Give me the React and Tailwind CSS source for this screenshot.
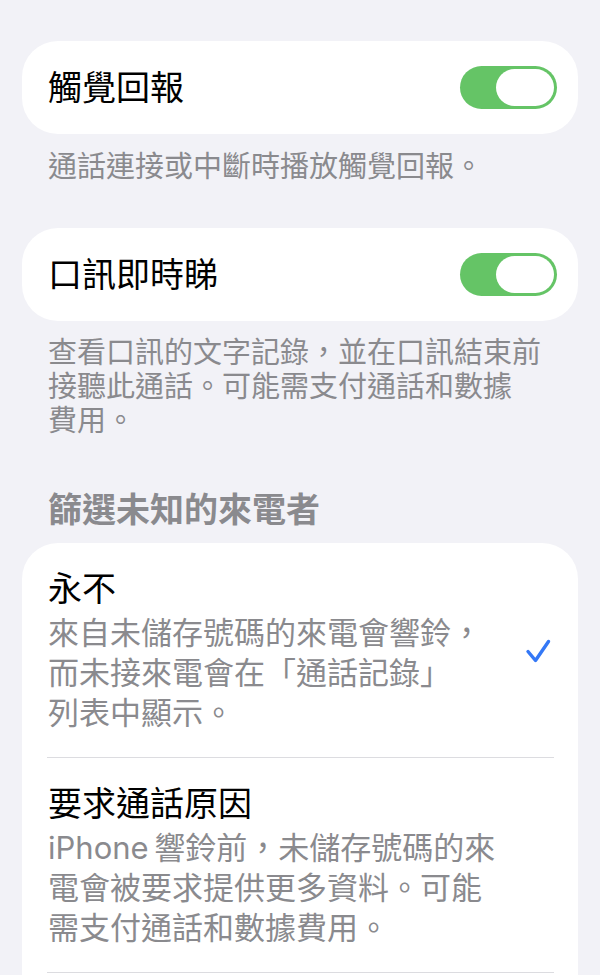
const FONT = { fontFamily: '"Inter", "Noto Sans CJK TC", sans-serif' };

function Toggle() {
  return (
    <div className="w-[97px] h-[43px] rounded-full bg-[#65c466] p-[3px] flex justify-end shrink-0">
      <div className="w-[58px] h-[37px] rounded-full bg-white" />
    </div>
  );
}

function ToggleCard({ title }) {
  return (
    <div className="bg-white rounded-[36px] h-[93px] pl-[26px] pr-[21px] flex items-center justify-between">
      <span className="text-[34px] leading-[42px] text-black">{title}</span>
      <Toggle />
    </div>
  );
}

function Check() {
  return (
    <svg width="26" height="26" viewBox="0 0 26 26" fill="none" className="shrink-0 mr-[3px]">
      <path d="M3 13.5 L10.5 22.5 L23.5 3.5" stroke="#3478f6" strokeWidth="3.4" strokeLinecap="round" strokeLinejoin="round" />
    </svg>
  );
}

function OptionRow({ title, lines, checked }) {
  return (
    <div className="ml-[25px] mr-[24px] pl-[1px] pt-[25px] pb-[24px] border-b border-[#dcdce0] flex items-center justify-between">
      <div>
        <p className="text-[34px] leading-[42px] text-black">{title}</p>
        <p className="mt-[3px] text-[31px] leading-[40px] text-[#8a8a8e]">
          {lines.map((l, i) => (
            <span key={i} className="block">{l}</span>
          ))}
        </p>
      </div>
      {checked && <Check />}
    </div>
  );
}

export default function App() {
  return (
    <div className="min-h-screen bg-[#f2f2f7] px-[22px] pt-[41px] pb-[40px]" style={FONT}>
      <ToggleCard title="觸覺回報" />
      <p className="mt-[16px] px-[26px] text-[29px] leading-[34px] text-[#8a8a8e]">
        通話連接或中斷時播放觸覺回報。
      </p>

      <div className="mt-[44px]">
        <ToggleCard title="口訊即時睇" />
      </div>
      <p className="mt-[15px] px-[26px] text-[29px] leading-[34px] text-[#8a8a8e]">
        查看口訊的文字記錄，並在口訊結束前
        <br />
        接聽此通話。可能需支付通話和數據
        <br />
        費用。
      </p>

      <h2 className="mt-[52px] mb-[13px] px-[26px] text-[34px] leading-[40px] font-semibold text-[#8a8a8e]">
        篩選未知的來電者
      </h2>

      <div className="bg-white rounded-[36px] pb-[60px]">
        <OptionRow
          title="永不"
          checked
          lines={["來自未儲存號碼的來電會響鈴，", "而未接來電會在「通話記錄」", "列表中顯示。"]}
        />
        <OptionRow
          title="要求通話原因"
          lines={["iPhone\u2009響鈴前，未儲存號碼的來", "電會被要求提供更多資料。可能", "需支付通話和數據費用。"]}
        />
      </div>
    </div>
  );
}
